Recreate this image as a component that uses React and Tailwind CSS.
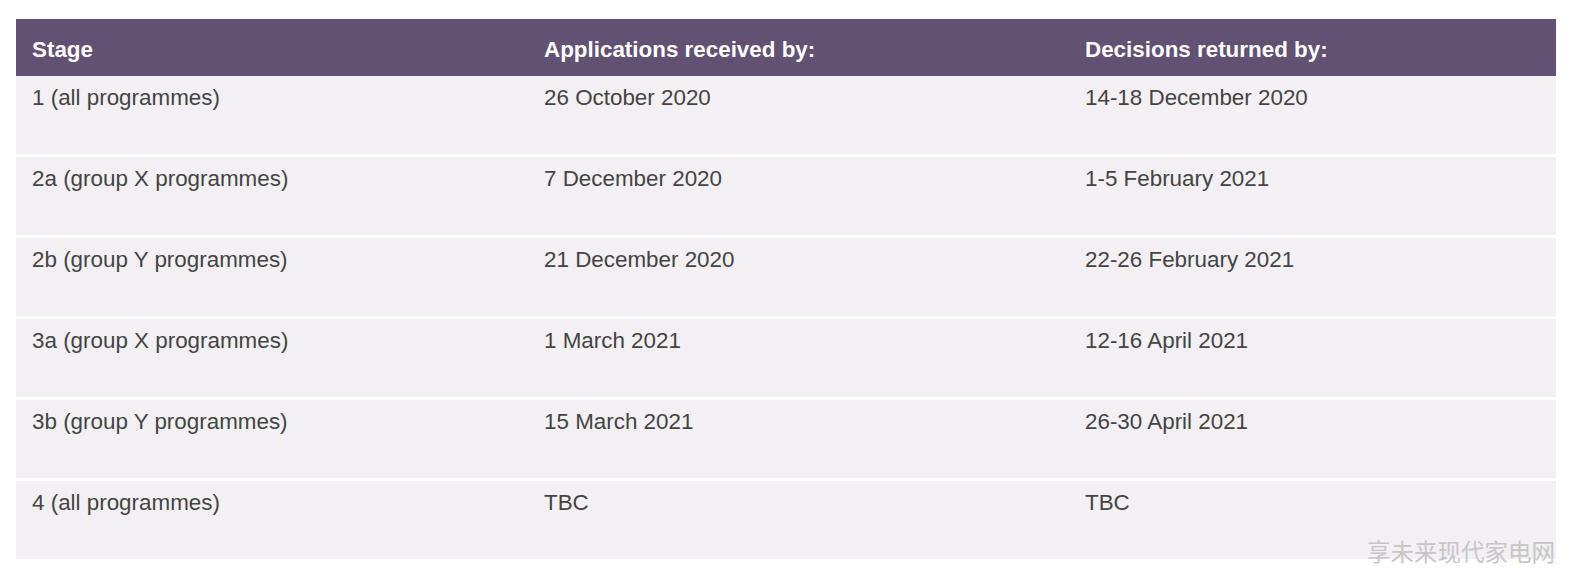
const rows = [
  ["1 (all programmes)", "26 October 2020", "14-18 December 2020"],
  ["2a (group X programmes)", "7 December 2020", "1-5 February 2021"],
  ["2b (group Y programmes)", "21 December 2020", "22-26 February 2021"],
  ["3a (group X programmes)", "1 March 2021", "12-16 April 2021"],
  ["3b (group Y programmes)", "15 March 2021", "26-30 April 2021"],
  ["4 (all programmes)", "TBC", "TBC"],
];

export default function App() {
  return (
    <div
      className="relative w-[1572px] h-[571px] bg-white overflow-hidden"
      style={{ fontFamily: '"Liberation Sans", Arial, sans-serif' }}
    >
      <div className="ml-4 mt-[19px] w-[1540px] flex flex-col">
        <div className="grid grid-cols-[512px_541px_487px] h-[57px] bg-[#615172] text-white font-bold text-[22.4px] leading-[25px]">
          <div className="pl-4 pt-[18px]">Stage</div>
          <div className="pl-4 pt-[18px]">Applications received by:</div>
          <div className="pl-4 pt-[18px]">Decisions returned by:</div>
        </div>
        <div className="flex flex-col gap-[3px]">
          {rows.map((r, i) => (
            <div
              key={i}
              className="grid grid-cols-[512px_541px_487px] h-[78px] bg-[#f2f0f3] text-[#444444] text-[22.4px] leading-[25px]"
            >
              <div className="pl-4 pt-[9px]">{r[0]}</div>
              <div className="pl-4 pt-[9px]">{r[1]}</div>
              <div className="pl-4 pt-[9px]">{r[2]}</div>
            </div>
          ))}
        </div>
      </div>
      <div
        className="absolute left-[1367px] top-[537px] text-[23.5px] leading-[28px] text-[#c6c6c6]"
        style={{ fontFamily: '"Noto Sans CJK SC", sans-serif' }}
      >
        享未来现代家电网
      </div>
    </div>
  );
}
